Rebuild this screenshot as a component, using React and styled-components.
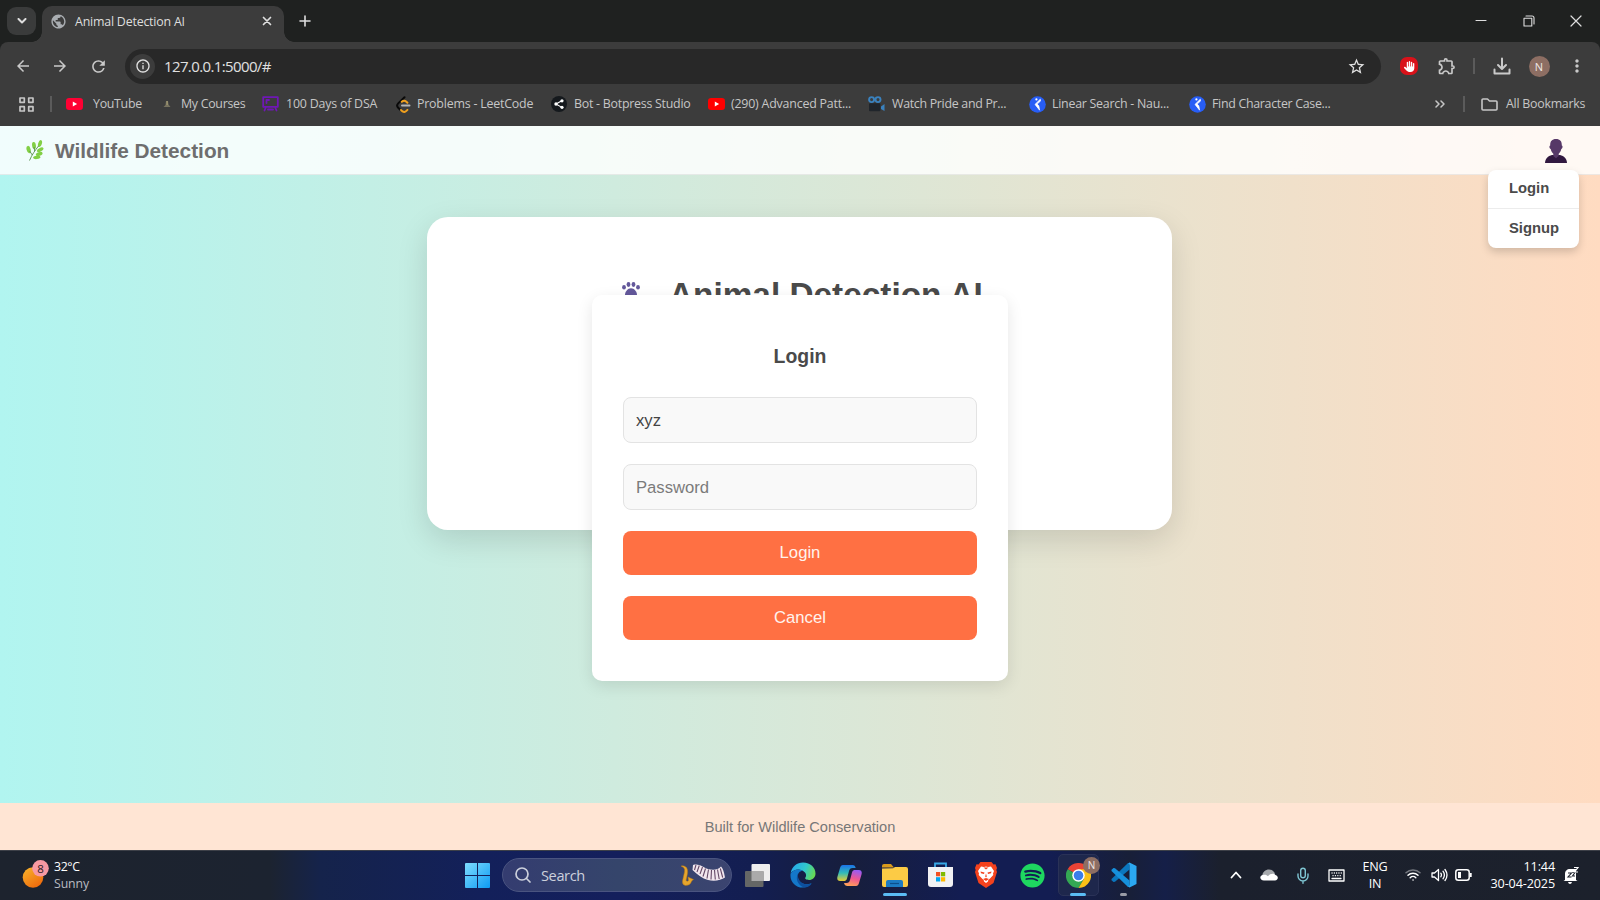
import React from "react";
import styled, { createGlobalStyle } from "styled-components";
import {
  MdArrowBack,
  MdArrowForward,
  MdRefresh,
  MdStarBorder,
  MdOutlineExtension,
  MdMoreVert,
  MdInfoOutline,
  MdPublic,
} from "react-icons/md";
import { FaSpotify, FaHand } from "react-icons/fa6";

const ui = `"Open Sans", "Noto Sans", sans-serif`;
const arial = `"Liberation Sans", Arial, sans-serif`;

const GlobalStyle = createGlobalStyle`
  * { box-sizing: border-box; }
  body { margin: 0; overflow: hidden; }
  svg { display: block; flex: none; }
`;

const Screen = styled.div`
  width: 1600px;
  height: 900px;
  display: flex;
  flex-direction: column;
  overflow: hidden;
  font-family: ${ui};
`;

/* ---------- browser chrome ---------- */

const TabStrip = styled.div`
  height: 42px;
  flex: none;
  display: flex;
  align-items: flex-start;
  padding-left: 7px;
  background: #1f2120;
  color: #dedede;
`;

const TabSearch = styled.div`
  width: 29px;
  height: 28px;
  margin-top: 7px;
  border-radius: 9px;
  background: #3a3b3b;
  display: grid;
  place-items: center;
`;

const Tab = styled.div`
  position: relative;
  width: 242px;
  height: 36px;
  margin: 6px 0 0 6px;
  padding: 0 12px 6px 8px;
  border-radius: 10px 10px 0 0;
  background: #3c3c3c;
  display: flex;
  align-items: center;
  font-size: 12.4px;
  &::before,
  &::after {
    content: "";
    position: absolute;
    bottom: 0;
    width: 10px;
    height: 10px;
  }
  &::before {
    left: -10px;
    background: radial-gradient(circle at 0 0, transparent 9.5px, #3c3c3c 10px);
  }
  &::after {
    right: -10px;
    background: radial-gradient(circle at 100% 0, transparent 9.5px, #3c3c3c 10px);
  }
`;

const TabTitle = styled.span`
  margin-left: 8px;
  flex: 1;
  white-space: nowrap;
  letter-spacing: -0.2px;
`;

const NewTab = styled.div`
  width: 41px;
  height: 42px;
  display: grid;
  place-items: center;
`;

const WindowControls = styled.div`
  margin-left: auto;
  height: 41px;
  padding-right: 18px;
  display: flex;
  align-items: center;
  gap: 35.500px;
`;

const ToolbarBack = styled.div`
  background: #1f2120;
  flex: none;
`;

const Toolbar = styled.div`
  height: 48px;
  background: #3c3c3c;
  border-radius: 8px 8px 0 0;
  display: flex;
  align-items: center;
  color: #c9c9c9;
`;

const NavSlot = styled.div`
  width: ${(p) => p.$w}px;
  display: flex;
  justify-content: center;
`;

const AddressBar = styled.div`
  width: 1256px;
  height: 35px;
  border-radius: 18px;
  background: #282828;
  display: flex;
  align-items: center;
  padding: 0 15px 0 5px;
  color: #e0e0e0;
  font-size: 15px;
`;

const InfoDisc = styled.div`
  width: 25px;
  height: 25px;
  border-radius: 50%;
  background: #3c3c3c;
  display: grid;
  place-items: center;
`;

const Url = styled.span`
  flex: 1;
  margin-left: 9px;
  letter-spacing: -0.62px;
`;

const Divider = styled.span`
  width: 2px;
  height: 16px;
  background: #5b5b5b;
  flex: none;
`;

const AdBlock = styled.div`
  width: 18px;
  height: 18px;
  border-radius: 7px;
  background: #d9121a;
  color: #fff;
  display: grid;
  place-items: center;
`;

const Avatar = styled.div`
  width: ${(p) => p.$size}px;
  height: ${(p) => p.$size}px;
  border-radius: 50%;
  background: #8d6e63;
  color: #f0e8e5;
  font-size: ${(p) => p.$font}px;
  line-height: ${(p) => p.$size}px;
  text-align: center;
`;

const BookmarkBar = styled.div`
  height: 36px;
  flex: none;
  background: #3c3c3c;
  display: flex;
  align-items: center;
  padding: 0 14px 8px 19px;
  color: #c6c6c6;
  font-size: 12.4px;
  white-space: nowrap;
`;

const Bookmark = styled.div`
  width: ${(p) => p.$w}px;
  flex: none;
  display: flex;
  align-items: center;
`;

const BookmarkIcon = styled.span`
  width: ${(p) => p.$w}px;
  flex: none;
  display: flex;
`;

const BookmarkText = styled.span`
  letter-spacing: ${(p) => p.$ls}px;
  line-height: 18px;
  margin-top: -1px;
`;

const BookmarkEnd = styled.div`
  margin-left: auto;
  display: flex;
  align-items: center;
`;

/* ---------- web page ---------- */

const Page = styled.div`
  position: relative;
  height: 724px;
  flex: none;
  display: flex;
  flex-direction: column;
  background: linear-gradient(to right, #b1f5f0, #ffdbc1);
  font-family: ${arial};
  color: #4a4a4a;
`;

const SiteHeader = styled.header`
  height: 49px;
  flex: none;
  padding: 1px 33px 0 26px;
  display: flex;
  align-items: center;
  justify-content: space-between;
  background: rgba(255, 255, 255, 0.82);
  border-bottom: 1px solid rgba(0, 0, 0, 0.07);
`;

const Brand = styled.div`
  display: flex;
  align-items: center;
  gap: 11px;
  font-size: 20.8px;
  font-weight: bold;
  color: #6e6e6e;
`;

const UserMenu = styled.div`
  position: absolute;
  top: 44px;
  right: 21px;
  width: 91px;
  background: #fff;
  border-radius: 8px;
  box-shadow: 0 4px 9px rgba(0, 0, 0, 0.17);
`;

const UserMenuItem = styled.div`
  height: 38px;
  padding-left: 21px;
  line-height: 36px;
  font-size: 14.8px;
  font-weight: bold;
  & + & {
    height: 40px;
    border-top: 1px solid #ececec;
    line-height: 38px;
  }
`;

const Main = styled.main`
  flex: 1;
  display: flex;
  justify-content: center;
  align-items: flex-start;
  padding: 42px 1px 0 0;
`;

const HeroCard = styled.section`
  width: 745px;
  height: 313px;
  border-radius: 21px;
  background: #fff;
  box-shadow: 0 10px 31px rgba(0, 0, 0, 0.13);
  padding-top: 59px;
`;

const HeroTitle = styled.h1`
  margin: 0 0 0 195px;
  display: flex;
  align-items: center;
  gap: 29px;
  font-size: 33.3px;
  line-height: 38px;
  letter-spacing: 0.03px;
  white-space: nowrap;
`;

const PawMark = styled.span`
  align-self: flex-start;
  padding-top: 6px;
`;

const LoginModal = styled.form`
  position: absolute;
  top: 169px;
  left: 592px;
  width: 416px;
  height: 386px;
  padding: 50px 31px 0;
  border-radius: 10px;
  background: #fff;
  box-shadow: 0 5px 16px rgba(0, 0, 0, 0.1);
  display: flex;
  flex-direction: column;
`;

const ModalTitle = styled.h3`
  margin: 0 0 29px;
  font-size: 19.4px;
  line-height: 23px;
  text-align: center;
`;

const Field = styled.input`
  height: 46px;
  margin: 0 0 21px;
  padding: 1px 12px 0;
  border: 1px solid #e3e3e3;
  border-radius: 8px;
  background: #f9f9f9;
  color: #444;
  font: 16.67px ${arial};
  outline: none;
  &::placeholder {
    color: #7b7b7b;
    opacity: 1;
  }
`;

const ActionButton = styled.button`
  height: 44px;
  margin: 0 0 21px;
  border: 0;
  border-radius: 8px;
  background: #ff7043;
  color: #fff3ee;
  font: 16.67px ${arial};
`;

const SiteFooter = styled.footer`
  height: 47px;
  flex: none;
  background: #ffe5d4;
  color: #777;
  font-size: 14.6px;
  line-height: 48px;
  text-align: center;
`;

/* ---------- taskbar ---------- */

const Taskbar = styled.div`
  height: 50px;
  flex: none;
  display: flex;
  align-items: center;
  padding-bottom: 1px;
  border-top: 1px solid #3d4048;
  color: #fff;
  background: linear-gradient(
    to right,
    #1d232e 0,
    #1c2330 270px,
    #15234b 320px,
    #13205a 480px,
    #141f5c 620px,
    #131e50 760px,
    #171e3c 850px,
    #131d52 960px,
    #131d52 1050px,
    #181f38 1130px,
    #151f48 1165px,
    #1b202d 1220px,
    #1c212c 1600px
  );
`;

const Weather = styled.div`
  width: 431px;
  padding: 0 0 1px 22px;
  display: flex;
  align-items: center;
`;

const WeatherText = styled.div`
  margin-left: 5px;
  font-size: 12.3px;
  line-height: 17px;
  letter-spacing: -0.4px;
`;

const Muted = styled.div`
  color: #b9bcc2;
  letter-spacing: -0.1px;
`;

const StartButton = styled.div`
  width: 71px;
  padding-left: 33.500px;
`;

const SearchBox = styled.div`
  width: 230px;
  height: 34px;
  border-radius: 17px;
  border: 1px solid #4a5480;
  background: linear-gradient(to right, #343c70, #35456b 50%, #3b4470);
  display: flex;
  align-items: center;
  padding: 0 5px 0 12px;
  color: #ccd0dc;
  font-size: 14.6px;
`;

const SearchLabel = styled.span`
  flex: 1;
  margin-left: 10px;
  letter-spacing: -0.4px;
`;

const AppRow = styled.div`
  display: flex;
  margin-left: 2.6px;
  height: 48px;
`;

const AppCell = styled.div`
  position: relative;
  width: 45.8px;
  height: 48px;
  display: grid;
  place-items: center;
  &::after {
    content: "";
    position: absolute;
    bottom: 3px;
    left: calc(50% - ${(p) => (p.$bar || 0) / 2}px);
    width: ${(p) => p.$bar || 0}px;
    height: 3px;
    border-radius: 2px;
    background: ${(p) => p.$tone || "#5bbcf5"};
  }
`;

const ActivePlate = styled.div`
  width: 41px;
  height: 42px;
  border-radius: 5px;
  border: 1px solid #2a3257;
  background: #1e274c;
  display: grid;
  place-items: center;
`;

const CornerAvatar = styled.div`
  position: absolute;
  top: 6px;
  right: 1px;
`;

const Tray = styled.div`
  margin-left: auto;
  display: flex;
  align-items: center;
  padding-right: 14px;
  font-size: 12.6px;
  line-height: 17px;
`;

const TrayItem = styled.div`
  width: ${(p) => p.$w}px;
  display: flex;
  justify-content: center;
`;

const Language = styled.div`
  width: 45px;
  text-align: center;
  letter-spacing: -0.2px;
`;

const Clock = styled.div`
  width: 77.5px;
  text-align: right;
  letter-spacing: -0.12px;
  white-space: nowrap;
`;

/* ---------- drawings ---------- */

const Stroke = ({ w = 16, h = 16, box, sw = 1.6, children, color = "currentColor" }) => (
  <svg width={w} height={h} viewBox={box || `0 0 ${w} ${h}`} fill="none" stroke={color} strokeWidth={sw} strokeLinecap="round" strokeLinejoin="round">
    {children}
  </svg>
);

const YouTube = ({ color = "#ff0033" }) => (
  <svg width="17" height="12" viewBox="0 0 17 12">
    <rect width="17" height="12" rx="3.2" fill={color} />
    <path d="M6.8 3.5v5l4.3-2.5z" fill="#fff" />
  </svg>
);

const Lamp = () => (
  <svg width="8" height="8" viewBox="0 0 8 8">
    <path d="M3 1h2l.5 3.5L7.5 7h-7l2-2z" fill="#77735f" />
    <path d="M3.6 1h1v4h-1z" fill="#a9a277" />
  </svg>
);

const Screencast = () => (
  <Stroke w={17} h={16} color="#6f17b5" sw={1.8}>
    <path d="M1.2 1.2h14.6v9.6H1.2zM4 11l-1.5 3.5M13 11l1.5 3.5M6 13.5h5M4.5 4v3M4.5 4H7" />
  </Stroke>
);

const LeetCode = () => (
  <Stroke w={15} h={17} sw={2}>
    <path d="M8.5 1.2 2.2 7.4c-1.3 1.3-1.3 3 0 4.3l2 2" stroke="#090909" />
    <path d="m5 14 1.6 1.4c1.3.9 2.7.6 3.8-.5l1-1M5.8 5.8c1.6-1.5 3-1.5 4.6 0l1 1" stroke="#f0a01e" />
    <path d="M6 9.6h7.5" stroke="#b5b5b5" />
  </Stroke>
);

const Botpress = () => (
  <svg width="16" height="16" viewBox="0 0 16 16">
    <circle cx="8" cy="8" r="8" fill="#15191d" />
    <path d="M10.8 4.8 5 8l5.8 3.4" stroke="#fff" strokeWidth="1.1" fill="none" />
    <circle cx="5" cy="8" r="1.7" fill="#fff" />
    <circle cx="11" cy="4.8" r="1.6" fill="#fff" />
    <circle cx="11" cy="11.3" r="1.6" fill="#fff" />
  </svg>
);

const Camera = () => (
  <svg width="17" height="16" viewBox="0 0 17 16">
    <circle cx="3.6" cy="3.6" r="2.5" fill="none" stroke="#3a82bf" strokeWidth="1.9" />
    <circle cx="10" cy="3.6" r="2.5" fill="none" stroke="#3a82bf" strokeWidth="1.9" />
    <rect x="1" y="7.2" width="11.4" height="8" rx="1" fill="#20252b" />
    <path d="M13 10.4 16.5 8v7L13 13z" fill="#3a82bf" />
  </svg>
);

const Naukri = () => (
  <svg width="17" height="17" viewBox="0 0 17 17">
    <circle cx="8.5" cy="8.5" r="8.3" fill="#275df5" />
    <circle cx="7.4" cy="3.4" r="1.1" fill="#fff" />
    <path d="M11.3 3.2 6 8.4l4.6 5.8-.8-4.4-1.7-1.7 3.4-3z" fill="#fff" stroke="#fff" strokeWidth=".7" />
  </svg>
);

const Herb = () => (
  <svg width="18" height="21" viewBox="0 0 18 21">
    <g fill="#82cf45">
      <ellipse cx="14" cy="3.6" rx="1.8" ry="3.6" transform="rotate(18 14 3.6)" />
      <ellipse cx="8" cy="5.6" rx="1.9" ry="3.6" transform="rotate(-8 8 5.6)" />
      <ellipse cx="2.6" cy="9.6" rx="2" ry="3.8" transform="rotate(-14 2.6 9.6)" />
      <ellipse cx="14.2" cy="9.8" rx="1.8" ry="3.6" transform="rotate(60 14.2 9.8)" />
      <ellipse cx="13.2" cy="14" rx="1.8" ry="3.5" transform="rotate(72 13.2 14)" />
      <ellipse cx="10.8" cy="17.4" rx="1.7" ry="3.7" transform="rotate(85 10.8 17.4)" />
    </g>
    <path d="M3.500 20.500C6 14.500 9 10.500 12.500 6M6.300 15 3.600 11M8.700 11 8 7" stroke="#55904b" strokeWidth=".9" fill="none" />
  </svg>
);

const UserBust = () => (
  <svg width="22" height="24" viewBox="0 0 22 24">
    <path d="M0 24c.2-4.5 3-7 7-8h8c4 1 6.800 3.500 7 8z" fill="#31183f" />
    <path d="M11 0c4 0 6 2.300 5.800 6.500 1.200.2.900 3.200-.5 3.500-.5 2.300-1.300 3.700-2.600 4.700V17L11 19.200 8.300 17v-2.300C7 13.700 6.200 12.300 5.700 10c-1.400-.3-1.700-3.300-.5-3.500C5 2.300 7 0 11 0z" fill="#563867" />
  </svg>
);

const Paw = () => (
  <svg width="18" height="19" viewBox="0 0 18 19" fill="#63589b">
    <ellipse cx="2" cy="5.300" rx="1.900" ry="2.300" />
    <ellipse cx="6.500" cy="2.500" rx="1.900" ry="2.400" />
    <ellipse cx="11.500" cy="2.500" rx="1.900" ry="2.400" />
    <ellipse cx="16" cy="5.300" rx="1.900" ry="2.300" />
    <path d="M9 6.300c3.400 0 6 3.500 6 6.700 0 3-2.500 3.500-6 3.500S3 16 3 13c0-3.200 2.600-6.700 6-6.700z" />
  </svg>
);

const Sun = () => (
  <svg width="27" height="29" viewBox="0 0 27 29">
    <defs>
      <linearGradient id="sun" x1="0" y1="0" x2=".7" y2="1">
        <stop offset="0" stopColor="#f8b62c" />
        <stop offset="1" stopColor="#ef6a0c" />
      </linearGradient>
    </defs>
    <circle cx="11" cy="17.500" r="10.300" fill="url(#sun)" />
    <circle cx="18.500" cy="8.300" r="8.300" fill="#f799a2" />
    <text x="18.500" y="12.500" fontSize="11.500" textAnchor="middle" fill="#2b1b1e" fontFamily="Open Sans">8</text>
  </svg>
);

const WindowsLogo = () => (
  <svg width="25" height="25" viewBox="0 0 25 25">
    <defs>
      <linearGradient id="win" x1="0" y1="0" x2="1" y2="1">
        <stop offset="0" stopColor="#7edcff" />
        <stop offset="1" stopColor="#0d9bf2" />
      </linearGradient>
    </defs>
    <path d="M1 0h11v12H0V1q0-1 1-1zM13 0h11q1 0 1 1v11H13zM0 13h12v12H1q-1 0-1-1zM13 13h12v11q0 1-1 1H13z" fill="url(#win)" />
  </svg>
);

const SaxAndKeys = () => (
  <svg width="46" height="22" viewBox="0 0 46 22">
    <path d="M1 2q3-1 5.500 1.500c2 3 .8 7 .3 9.500L6 16.500q1.500 1.500 2.500 0L8 13l5.500 2.500q-2 .8-2.500 3-1 3-5.500 3-3.500-.5-3-4.500L4.500 8q.7-3.500-1-4.500z" fill="#e6a52c" stroke="#b87812" strokeWidth=".5" />
    <path d="M13 1c6-2 10 2.500 15 4s10 1 13-2.500q2.500 2 4 11c-4 3-11 4-17 2.500S18 11 12.500 6z" fill="#f1e6ee" />
    <path d="m16 1-1.500 5M19.300 1.500 17 8M22.500 3 20 10M25.500 4.500 23 12.500M28.500 5.500l-1.500 9M31.500 6l-.5 9.500M34.500 6l.8 9.500M37.500 5.500l1.700 9.500M40.300 4.500l2.400 9" stroke="#644866" strokeWidth="1.100" />
  </svg>
);

const TaskView = () => (
  <svg width="25" height="23" viewBox="0 0 25 23">
    <rect x="6.500" width="18.500" height="17" rx="1" fill="#eeeeee" />
    <rect y="7" width="18.500" height="16" rx="1" fill="#656766" />
    <path d="M6.500 7h12v10h-12z" fill="#aaaaaa" />
  </svg>
);

const Edge = () => (
  <svg width="26" height="26" viewBox="0 0 26 26">
    <defs>
      <linearGradient id="edgeTop" x1="0" y1=".3" x2="1" y2=".6">
        <stop offset="0" stopColor="#25a7ec" />
        <stop offset=".55" stopColor="#31c9cb" />
        <stop offset="1" stopColor="#69d94f" />
      </linearGradient>
    </defs>
    <path d="M.7 11C2 4.300 7 .5 13 .5c7.500 0 12.500 5 12.500 11 0 4-3 6.500-6.500 6.500-3 0-4.500-1.300-3.600-2.400 1-1.200 1-3.300-.4-5C11 6 4 7 .7 11z" fill="url(#edgeTop)" />
    <path d="M.6 11.500C3.500 7 9.500 6.500 13 9c-3.500-.5-6 2.800-5 7 1 5 7 8 13.500 5.300-2 2.800-5.400 4.300-8.800 4.300C5 25.600-.5 19 .6 11.500z" fill="#1477c9" />
    <path d="M8 11.500c-3 5.500 0 12 6 13.900 3 .1 6-1.500 7.800-4-7 2.500-13-1.400-13.800-6.500z" fill="#0d4f9e" />
  </svg>
);

const Copilot = () => (
  <svg width="25" height="23" viewBox="0 0 25 23">
    <defs>
      <linearGradient id="copA" x1="0" y1="0" x2="0" y2="1">
        <stop offset="0" stopColor="#1b73e8" />
        <stop offset=".5" stopColor="#31bbb8" />
        <stop offset="1" stopColor="#e8cc32" />
      </linearGradient>
      <linearGradient id="copB" x1=".6" y1="0" x2=".3" y2="1">
        <stop offset="0" stopColor="#9a5bf2" />
        <stop offset=".5" stopColor="#ef5793" />
        <stop offset="1" stopColor="#ffa355" />
      </linearGradient>
    </defs>
    <path d="M6 1h9.500c2 0 2.700 1.200 3.200 3h-3.200c-2 0-3 1-3.500 3l-2 7.500C9.500 16.500 8.300 17 6.500 17H3.200C.5 17-.2 15 .5 12.500L3 4C3.500 2 4.500 1 6 1z" fill="url(#copA)" />
    <path d="M19 22H10.500c-2 0-3-1-3.500-3h2.500c2 0 3-1 3.500-3l2-7.500c.5-2 1.700-2.500 3.500-2.500h3.300c2.700 0 3.400 2 2.700 4.500L22 19c-.5 2-1.500 3-3 3z" fill="url(#copB)" />
  </svg>
);

const Explorer = () => (
  <svg width="26" height="23" viewBox="0 0 26 23">
    <path d="M0 2q0-2 2-2h7l3 3.500H0z" fill="#d99a1c" />
    <path d="M0 4.500 11 4.300 13 3h11q2 0 2 2v16q0 2-2 2H2q-2 0-2-2z" fill="#fccb45" />
    <path d="M4 23v-5q0-2 2-2h13q2 0 2 2v5z" fill="#1c7bc4" />
    <path d="M8 19.500h9" stroke="#0c4f8c" strokeWidth="1.200" />
  </svg>
);

const Store = () => (
  <svg width="25" height="26" viewBox="0 0 25 26">
    <path d="M7 5V1.500h11V5" stroke="#39a9e6" strokeWidth="1.800" fill="none" />
    <path d="M0 5h25v17q0 3-3 3H3q-3 0-3-3z" fill="#f1f1f3" />
    <path d="M8 10h4.200v4.300H8z" fill="#f25022" />
    <path d="M13 10h4.200v4.300H13z" fill="#7fba00" />
    <path d="M8 15.200h4.200v4.300H8z" fill="#00a4ef" />
    <path d="M13 15.200h4.200v4.300H13z" fill="#ffb900" />
  </svg>
);

const Brave = () => (
  <svg width="22" height="26" viewBox="0 0 22 26">
    <path d="m5.500 0h11l2 2.500 2-.3L22 6l-.7 2L22 10l-3.500 11L11 26 3.500 21 0 10l.7-2L0 6l1.500-3.800 2 .3z" fill="#f4421d" />
    <path d="M6 4.500 9 5l2-.5 2 .5 3-.5 3 4.500-1 2.500.3 1.500-3.300 3.500L13.300 18l-.3 1.500L11 21l-2-1.500L8.700 18 7 16.500 3.700 13l.3-1.500L3 9z" fill="#fff" />
    <path d="m5.500 9.500 4 1-.5 1.500-3-.8zM16.500 9.500l-4 1 .5 1.500 3-.8zM11 11.500l.8 3L11 15.500l-.8-1zM8 17l3-1 3 1-3 2zM8.500 5.500 11 7.500l2.500-2z" fill="#f4421d" />
  </svg>
);

const Chrome = () => (
  <svg width="25" height="25" viewBox="0 0 24 24">
    <path d="M12 12 1.600 6A12 12 0 0 1 22.400 6z" fill="#ea4335" />
    <path d="M1.600 6A12 12 0 0 0 12 24l5.200-9L12 12z" fill="#34a853" />
    <path d="M22.400 6H12l5.200 9L12 24A12 12 0 0 0 22.400 6z" fill="#fbc116" />
    <circle cx="12" cy="12" r="6" fill="#fff" />
    <circle cx="12" cy="12" r="4.600" fill="#3b7eea" />
  </svg>
);

const VsCode = () => (
  <svg width="26" height="26" viewBox="0 0 26 26">
    <path d="M18.500 7.500 4 19.800l-1.500.2L.5 18.200V17L17 1l1.500 1z" fill="#0b76bd" />
    <path d="M18.500 18.500 4 6.200 2.500 6 .5 7.800V9L17 25l1.500-1z" fill="#1690dc" />
    <path d="M18.500.5 25.500 4v18l-7 3.500-2-1.500c1.200.5 2-.2 2-1.500V3.500c0-1.300-.8-2-2-1.500z" fill="#2ba8f2" />
  </svg>
);

const Cloud = () => (
  <svg width="18" height="12" viewBox="0 0 18 12">
    <path d="M2 7.500C2.500 3 5.500.5 9 .5c3 0 5 1.700 6 4.500L9 9z" fill="#a5a8ac" />
    <path d="M4 11.500c-4.500 0-5-5-1-5.500 2.500-.6 4 .3 5 1.200C10 4.500 14 4 15.500 6c3.500 1 2.800 5.500-.5 5.500z" fill="#fff" />
  </svg>
);

const bookmarks = [
  { text: "YouTube", icon: <YouTube />, w: 97, gap: 27, ls: -0.3 },
  { text: "My Courses", icon: <Lamp />, w: 99, gap: 18, ls: -0.3 },
  { text: "100 Days of DSA", icon: <Screencast />, w: 134, gap: 24, ls: -0.2 },
  { text: "Problems - LeetCode", icon: <LeetCode />, w: 155, gap: 21, ls: -0.2 },
  { text: "Bot - Botpress Studio", icon: <Botpress />, w: 157, gap: 23, ls: -0.25 },
  { text: "(290) Advanced Patt...", icon: <YouTube color="#ff0000" />, w: 160, gap: 23, ls: -0.2 },
  { text: "Watch Pride and Pr...", icon: <Camera />, w: 161, gap: 24, ls: -0.3 },
  { text: "Linear Search - Nau...", icon: <Naukri />, w: 160, gap: 23, ls: -0.25 },
  { text: "Find Character Case...", icon: <Naukri />, w: 150, gap: 23, ls: -0.3 },
];

function BrowserChrome() {
  return (
    <>
      <TabStrip>
        <TabSearch>
          <Stroke w={10} h={6} sw={2}><path d="m1.500 1 3.500 3.500L8.500 1" /></Stroke>
        </TabSearch>
        <Tab>
          <MdPublic size={17} color="#a9adb1" />
          <TabTitle>Animal Detection AI</TabTitle>
          <Stroke w={10} h={10} sw={1.700}><path d="m1.500 1.500 7 7m0-7-7 7" /></Stroke>
        </Tab>
        <NewTab>
          <Stroke w={12} h={12} sw={1.600}><path d="M6 1v10M1 6h10" /></Stroke>
        </NewTab>
        <WindowControls>
          <Stroke w={12} h={12} sw={1.100}><path d="M1 5.500h10" /></Stroke>
          <Stroke w={12} h={12} sw={1.100}><path d="M1 3.200h7.800V11H1zM3 1h6q2 0 2 2v6" /></Stroke>
          <Stroke w={12} h={12} sw={1.200}><path d="m1 1 10 10m0-10L1 11" /></Stroke>
        </WindowControls>
      </TabStrip>
      <ToolbarBack>
        <Toolbar>
          <NavSlot $w={46}><MdArrowBack size={18} /></NavSlot>
          <NavSlot $w={28}><MdArrowForward size={18} /></NavSlot>
          <NavSlot $w={48}><MdRefresh size={19} /></NavSlot>
          <NavSlot $w={3} />
          <AddressBar>
            <InfoDisc><MdInfoOutline size={16} /></InfoDisc>
            <Url>127.0.0.1:5000/#</Url>
            <MdStarBorder size={19} />
          </AddressBar>
          <NavSlot $w={56}><AdBlock><FaHand size={11} /></AdBlock></NavSlot>
          <NavSlot $w={20}><MdOutlineExtension size={20} /></NavSlot>
          <NavSlot $w={34}><Divider /></NavSlot>
          <NavSlot $w={22}>
            <Stroke w={18} h={18} sw={2}><path d="M9 1.500v10M5 8l4 4 4-4M1.500 12.500v4h15v-4" /></Stroke>
          </NavSlot>
          <NavSlot $w={52}><Avatar $size={21} $font={11}>N</Avatar></NavSlot>
          <NavSlot $w={24}><MdMoreVert size={20} /></NavSlot>
        </Toolbar>
      </ToolbarBack>
      <BookmarkBar>
        <Bookmark $w={31}>
          <Stroke w={15} h={15} sw={1.700}>
            <path d="M1 1h4.300v4.300H1zM9.700 1H14v4.300H9.700zM1 9.700h4.300V14H1zM9.700 9.700H14V14H9.700z" />
          </Stroke>
        </Bookmark>
        <Bookmark $w={16}><Divider /></Bookmark>
        {bookmarks.map((b) => (
          <Bookmark key={b.text} $w={b.w}>
            <BookmarkIcon $w={b.gap}>{b.icon}</BookmarkIcon>
            <BookmarkText $ls={b.ls}>{b.text}</BookmarkText>
          </Bookmark>
        ))}
        <BookmarkEnd>
          <Bookmark $w={28}>
            <Stroke w={10} h={8} sw={1.500}><path d="m1 1 3 3-3 3M6 1l3 3-3 3" /></Stroke>
          </Bookmark>
          <Bookmark $w={18}><Divider /></Bookmark>
          <Bookmark $w={25}>
            <Stroke w={17} h={13} sw={1.600}><path d="M1 2q0-1 1-1h4.500l2 2H15q1 0 1 1v7q0 1-1 1H2q-1 0-1-1z" /></Stroke>
          </Bookmark>
          <Bookmark $w={80}><BookmarkText $ls={-0.26}>All Bookmarks</BookmarkText></Bookmark>
        </BookmarkEnd>
      </BookmarkBar>
    </>
  );
}

function WildlifePage() {
  return (
    <Page>
      <SiteHeader>
        <Brand><Herb />Wildlife Detection</Brand>
        <UserBust />
      </SiteHeader>
      <Main>
        <HeroCard>
          <HeroTitle><PawMark><Paw /></PawMark>Animal Detection AI</HeroTitle>
        </HeroCard>
      </Main>
      <SiteFooter>Built for Wildlife Conservation</SiteFooter>
      <UserMenu>
        <UserMenuItem>Login</UserMenuItem>
        <UserMenuItem>Signup</UserMenuItem>
      </UserMenu>
      <LoginModal>
        <ModalTitle>Login</ModalTitle>
        <Field defaultValue="xyz" />
        <Field type="password" placeholder="Password" />
        <ActionButton type="button">Login</ActionButton>
        <ActionButton type="button">Cancel</ActionButton>
      </LoginModal>
    </Page>
  );
}

function WindowsTaskbar() {
  return (
    <Taskbar>
      <Weather>
        <Sun />
        <WeatherText>
          <div>32°C</div>
          <Muted>Sunny</Muted>
        </WeatherText>
      </Weather>
      <StartButton><WindowsLogo /></StartButton>
      <SearchBox>
        <Stroke w={16} h={16} sw={1.700}><path d="M7 1a6 6 0 1 1 0 12A6 6 0 0 1 7 1zM11.500 11.500 15 15" /></Stroke>
        <SearchLabel>Search</SearchLabel>
        <SaxAndKeys />
      </SearchBox>
      <AppRow>
        <AppCell><TaskView /></AppCell>
        <AppCell><Edge /></AppCell>
        <AppCell><Copilot /></AppCell>
        <AppCell $bar={24}><Explorer /></AppCell>
        <AppCell><Store /></AppCell>
        <AppCell><Brave /></AppCell>
        <AppCell><FaSpotify size={25} color="#1ed760" /></AppCell>
        <AppCell $bar={16}>
          <ActivePlate><Chrome /></ActivePlate>
          <CornerAvatar><Avatar $size={17} $font={10}>N</Avatar></CornerAvatar>
        </AppCell>
        <AppCell $bar={7} $tone="#9a9ca6"><VsCode /></AppCell>
      </AppRow>
      <Tray>
        <TrayItem $w={34}><Stroke w={12} h={8} sw={1.800}><path d="m1.500 6.500 4.500-5 4.500 5" /></Stroke></TrayItem>
        <TrayItem $w={33}><Cloud /></TrayItem>
        <TrayItem $w={34}>
          <Stroke w={12} h={17} sw={1.400} color="#7fc6d3"><path d="M3.700 3.500a2.300 2.300 0 0 1 4.600 0v5a2.300 2.300 0 0 1-4.600 0zM1 7v2a5 5 0 0 0 10 0V7M6 14v2.300" /></Stroke>
        </TrayItem>
        <TrayItem $w={33}>
          <Stroke w={17} h={13} sw={1.300}><path d="M1 1h15v11H1zM4 9.500h9M4 4h.1M6.300 4h.1M8.600 4h.1M10.900 4h.1M13.200 4h.1M5 6.700h.1M7.400 6.700h.1M9.800 6.700h.1M12.200 6.700h.1" /></Stroke>
        </TrayItem>
        <Language>
          <div>ENG</div>
          <div>IN</div>
        </Language>
        <TrayItem $w={31}>
          <Stroke w={16} h={14} sw={1.500}>
            <path d="M1 4.800a10 10 0 0 1 14 0" opacity=".4" />
            <path d="M3 7.300a7 7 0 0 1 10 0M5.200 9.700a4 4 0 0 1 5.600 0M8 12h.1" />
          </Stroke>
        </TrayItem>
        <TrayItem $w={21}>
          <Stroke w={17} h={14} sw={1.300}><path d="M1 5v4h2.500L7.500 12.500v-11L3.500 5zM9.800 5.200q1.300 1.800 0 3.600M12 3.200q2.800 3.800 0 7.600M14 1.500q4 5.500 0 11" /></Stroke>
        </TrayItem>
        <TrayItem $w={28}>
          <svg width="17" height="12" viewBox="0 0 17 12">
            <rect x=".8" y=".8" width="13.400" height="10.400" rx="2.500" fill="none" stroke="#fff" strokeWidth="1.500" />
            <path d="M3 3h3v6H3zM15 4h1.700v4H15z" fill="#fff" />
          </svg>
        </TrayItem>
        <Clock>
          <div>11:44</div>
          <div>30-04-2025</div>
        </Clock>
        <TrayItem $w={31}>
          <svg width="16" height="17" viewBox="0 0 16 17">
            <path d="M2 13V7c0-3 2-5 5-5h6v11l1.500 1H.5zM5 15h4q-.5 2-2 2t-2-2z" fill="#fff" />
            <path d="M5 6h3.500L5 10h3.500M9.500 5.500H12L9.500 9H12" stroke="#1c212c" strokeWidth="1.100" fill="none" />
            <path d="M11 .5h4L11.500 5H15" stroke="#fff" strokeWidth="1.200" fill="none" />
          </svg>
        </TrayItem>
      </Tray>
    </Taskbar>
  );
}

export default function App() {
  return (
    <>
      <GlobalStyle />
      <Screen>
        <BrowserChrome />
        <WildlifePage />
        <WindowsTaskbar />
      </Screen>
    </>
  );
}
